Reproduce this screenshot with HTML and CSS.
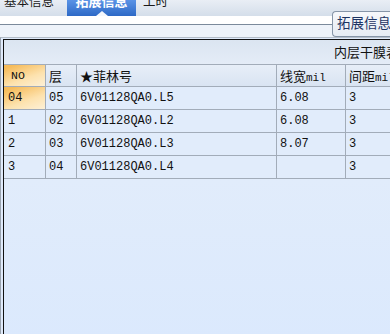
FILE: index.html
```html
<!DOCTYPE html>
<html lang="zh-CN">
<head>
    <meta charset="UTF-8">
    <meta name="viewport" content="width=device-width, initial-scale=1.0">
    <title>拓展信息</title>
    <link rel="stylesheet" href="styles.css">
</head>
<body>
    <div class="tabs">
        <div class="tab"><span>基本信息</span></div>
        <div class="tab active"><span>拓展信息</span></div>
        <div class="tab"><span>工时</span></div>
    </div>
    <div class="toolbar">
        <div class="strip">
            <div class="strip-input"></div>
        </div>
        <div class="tag">拓展信息</div>
    </div>
    <div class="main">
        <div class="panel">
            <div class="panel-title">内层干膜表</div>
            <div class="row head">
                <div class="cell c-no sel">NO</div>
                <div class="cell c-layer">层</div>
                <div class="cell c-film">★菲林号</div>
                <div class="cell c-width">线宽<span class="mono">mil</span></div>
                <div class="cell c-gap">间距<span class="mono">mil</span></div>
                <div class="cell c-rest"></div>
            </div>
            <div class="row">
                <div class="cell c-no sel">04</div>
                <div class="cell c-layer">05</div>
                <div class="cell c-film">6V01128QA0.L5</div>
                <div class="cell c-width">6.08</div>
                <div class="cell c-gap">3</div>
                <div class="cell c-rest"></div>
            </div>
            <div class="row">
                <div class="cell c-no">1</div>
                <div class="cell c-layer">02</div>
                <div class="cell c-film">6V01128QA0.L2</div>
                <div class="cell c-width">6.08</div>
                <div class="cell c-gap">3</div>
                <div class="cell c-rest"></div>
            </div>
            <div class="row">
                <div class="cell c-no">2</div>
                <div class="cell c-layer">03</div>
                <div class="cell c-film">6V01128QA0.L3</div>
                <div class="cell c-width">8.07</div>
                <div class="cell c-gap">3</div>
                <div class="cell c-rest"></div>
            </div>
            <div class="row">
                <div class="cell c-no">3</div>
                <div class="cell c-layer">04</div>
                <div class="cell c-film">6V01128QA0.L4</div>
                <div class="cell c-width"></div>
                <div class="cell c-gap">3</div>
                <div class="cell c-rest"></div>
            </div>
            <div class="empty"></div>
        </div>
    </div>
</body>
</html>
```

FILE: styles.css
```css
body {
    margin: 0;
    width: 390px;
    height: 334px;
    overflow: hidden;
    background: #dfeafb;
    font-family: "Noto Sans CJK SC", "Liberation Sans", sans-serif;
    color: #111;
}
.tabs {
    display: flex;
    height: 16px;
    background: linear-gradient(#e9eef5, #d4deea);
    overflow: hidden;
}
.tab {
    position: relative;
    padding: 0 4px;
    margin-right: 9px;
    font-size: 12.5px;
    color: #1a1a1a;
    white-space: nowrap;
}
.tab span {
    display: block;
    margin-top: -8px;
    line-height: 17px;
}
.tab.active {
    width: 61px;
    margin-right: 3px;
    background: linear-gradient(#5a93e6, #2d69c6);
    color: #fff;
    font-weight: bold;
    text-align: center;
    font-size: 13px;
}
.tab.active::after {
    content: "";
    position: absolute;
    left: 29px;
    bottom: 0;
    border-left: 6px solid transparent;
    border-right: 6px solid transparent;
    border-bottom: 5px solid #f4f7fc;
}
.toolbar {
    display: flex;
    height: 21px;
    background: #eef3fa;
}
.strip {
    flex: 1;
}
.strip-input {
    height: 8px;
    background: #fff;
    border-bottom: 1px solid #7b8a9b;
}
.tag {
    flex: none;
    width: 62px;
    height: 26px;
    margin: -5px -4px 0 0;
    box-sizing: border-box;
    border: 1px solid #8695a8;
    border-right: none;
    border-radius: 4px 0 0 4px;
    background: linear-gradient(#f6f8fb, #e6ecf4);
    color: #1d3463;
    font-size: 13.5px;
    line-height: 21px;
    padding-left: 4px;
    white-space: nowrap;
}
.main {
    border-top: 1px solid #b4bdc8;
    border-left: 1px solid #9aa3ae;
    padding: 1px 0 0 2px;
}
.panel {
    width: 725px;
    border-top: 1px solid #111;
    border-left: 1px solid #111;
}
.panel-title {
    height: 24px;
    line-height: 24px;
    text-align: center;
    font-size: 13px;
    background: linear-gradient(#dbe5f1, #e4ecf7);
}
.row {
    display: flex;
    height: 23px;
    box-sizing: border-box;
    border-bottom: 1px solid #a2acb9;
    background: #e1ecfb;
    font-family: "Liberation Mono", "Noto Sans CJK SC", monospace;
    font-size: 12px;
    line-height: 22px;
}
.row.head {
    border-top: 1px solid #a2acb9;
    background: linear-gradient(#e7eef8, #d9e4f2);
    font-family: "Noto Sans CJK SC", "Liberation Sans", sans-serif;
    font-size: 13px;
    line-height: 21px;
}
.cell {
    box-sizing: border-box;
    border-right: 1px solid #a2acb9;
    padding-left: 3px;
    white-space: nowrap;
    overflow: hidden;
}
.mono {
    font-family: "Liberation Mono", monospace;
    font-size: 11px;
}
.c-no { width: 42px; padding-left: 4px; }
.c-layer { width: 31px; }
.c-film { width: 200px; }
.c-width { width: 69px; }
.c-gap { width: 70px; }
.c-rest { flex: 1; border-right: none; }
.head .c-no {
    font-family: "Liberation Mono", monospace;
    font-size: 11.5px;
    padding-left: 7px;
}
.head .sel {
    background: linear-gradient(#fcd992, #f3bb5a);
}
.row .sel {
    background: linear-gradient(160deg, #f6bb5a 10%, #fde2ae 60%, #fdf0d6);
}
.empty {
    height: 160px;
    background: linear-gradient(#e1ecfb, #dbe9fd);
}
```
